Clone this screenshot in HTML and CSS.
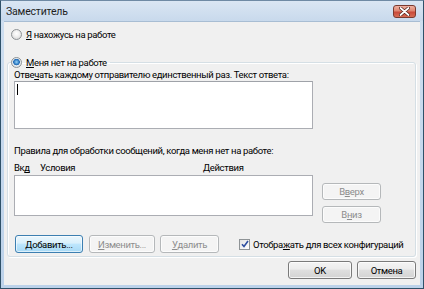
FILE: index.html
```html
<!DOCTYPE html>
<html lang="ru">
<head>
<meta charset="utf-8">
<title>Заместитель</title>
<link rel="stylesheet" href="styles.css">
</head>
<body>
<div class="window">
  <div class="titlebar">
    <span class="title">Заместитель</span>
    <span class="close">
      <svg width="11" height="9" viewBox="0 0 11 9"><path d="M1.5 1 L9.5 8 M9.5 1 L1.5 8" stroke="#4a1c14" stroke-width="3.2" stroke-linecap="round"/><path d="M1.5 1 L9.5 8 M9.5 1 L1.5 8" stroke="#ffffff" stroke-width="1.8" stroke-linecap="round"/></svg>
    </span>
  </div>
  <div class="client">
    <label class="radio first"><span class="rb"></span><span><u>Я</u> нахожусь на работе</span></label>
    <fieldset class="group">
      <legend><label class="radio"><span class="rb checked"></span><span><u>М</u>еня нет на работе</span></label></legend>
      <div class="lbl">Отве<u>ч</u>ать каждому отправителю единственный раз. Текст ответа:</div>
      <div class="textbox"><span class="caret"></span></div>
      <div class="lbl rules">Правила для обработки сообщений, когда меня нет на работе:</div>
      <div class="rulesrow">
        <div class="rulescol">
          <div class="cols"><span class="c1">Вк<u>д</u></span><span class="c2">Условия</span><span class="c3">Действия</span></div>
          <div class="listbox"></div>
        </div>
        <div class="sidebtns">
          <span class="btn disabled side">В<u>в</u>ерх</span>
          <span class="btn disabled side">В<u>н</u>из</span>
        </div>
      </div>
      <div class="btnrow">
        <span class="btn default add"><u>Д</u>обавить...</span>
        <span class="btn disabled edit"><u>И</u>зменить...</span>
        <span class="btn disabled del"><u>У</u>далить</span>
        <label class="check"><span class="cb"><svg width="8" height="8" viewBox="0 0 8 8"><path d="M1 4.2 L3 6.5 L7 1" fill="none" stroke="#2d4ea0" stroke-width="1.6"/></svg></span><span class="checktext">Отобра<u>ж</u>ать для всех конфигураций</span></label>
      </div>
    </fieldset>
    <div class="footer">
      <span class="btn ok">OK</span>
      <span class="btn cancel">Отмена</span>
    </div>
  </div>
</div>
</body>
</html>
```
FILE: styles.css
```css
html, body {
  margin: 0;
  padding: 0;
}
body {
  font-family: Roboto, "Liberation Sans", Arial, sans-serif;
  font-size: 9.5px;
  letter-spacing: -0.35px;
  color: #000;
  background: #fff;
}
u { text-decoration: underline; text-underline-offset: 1px; }

.window {
  width: 424px;
  height: 289px;
  box-sizing: border-box;
  border: 1px solid #2f5169;
  border-top-color: #6f8aa4;
  background: linear-gradient(#cfdff0, #bcd2ea);
  padding: 0 3px 3px 3px;
  display: flex;
  flex-direction: column;
  overflow: hidden;
}

.titlebar {
  height: 20px;
  flex: none;
  display: flex;
  align-items: center;
  justify-content: space-between;
  background: linear-gradient(#dae6f3, #c8d9ec);
  margin: 0 -3px;
  padding: 0 7px 0 5px;
}
.title {
  font-size: 10.5px;
  letter-spacing: -0.2px;
  color: #1e1e1e;
}
.close {
  width: 23px;
  height: 13px;
  box-sizing: border-box;
  border: 1px solid #7a3a2f;
  border-radius: 3px;
  background: linear-gradient(#efb0a0 0%, #de8570 45%, #c94a3a 55%, #d66d55 100%);
  display: flex;
  align-items: center;
  justify-content: center;
  margin-top: 1px;
}

.client {
  flex: 1;
  min-height: 0;
  background: #f0f0f0;
  display: flex;
  flex-direction: column;
  padding-top: 6px;
  border-top: 1px solid #a8bdd3;
}

.radio {
  display: flex;
  align-items: center;
  gap: 4px;
  height: 13px;
  white-space: nowrap;
}
.radio.first {
  margin-left: 7px;
}
.rb {
  width: 9px;
  height: 9px;
  border-radius: 50%;
  border: 1px solid #8e9396;
  background: radial-gradient(circle at 50% 40%, #ffffff 0, #f1f1f1 40%, #cfcfcf 100%);
  flex: none;
}
.rb.checked {
  background: radial-gradient(circle at 50% 45%, #9cd2f5 0, #4f9ad7 1.6px, #1f66b1 3px, #e9eef2 3.6px, #cfd6dc 100%);
}

.group {
  margin: 15px 4px 0 3px;
  padding: 0 6px 3px 6px;
  border: 1px solid #d5dfe5;
  border-radius: 3px;
  box-shadow: inset 1px 1px 0 #ffffff, 1px 1px 0 #ffffff;
  min-width: 0;
}
.group legend {
  padding: 0 3px 0 0;
  margin-left: -3px;
}

.lbl {
  line-height: 12px;
  height: 12px;
  white-space: nowrap;
}
.textbox {
  width: 299px;
  height: 48px;
  box-sizing: border-box;
  border: 1px solid #abadb3;
  border-top-color: #9fa2a8;
  background: #fff;
  position: relative;
}
.caret {
  position: absolute;
  left: 2px;
  top: 2px;
  width: 1px;
  height: 11px;
  background: #000;
}
.lbl.rules {
  margin-top: 16px;
}

.rulesrow {
  display: flex;
  gap: 9px;
  margin-top: 5px;
}
.rulescol {
  width: 299px;
}
.cols {
  display: flex;
  height: 12px;
  line-height: 12px;
  white-space: nowrap;
}
.cols .c1 { width: 26px; }
.cols .c2 { width: 163px; }
.listbox {
  margin-top: 1px;
  width: 299px;
  height: 41px;
  box-sizing: border-box;
  border: 1px solid #abadb3;
  background: #fff;
}
.sidebtns {
  display: flex;
  flex-direction: column;
  gap: 6px;
  padding-top: 21px;
}

.btn {
  display: flex;
  align-items: center;
  justify-content: center;
  box-sizing: border-box;
  height: 18px;
  flex: none;
  border: 1px solid #7a7a7a;
  border-radius: 3px;
  background: linear-gradient(#f4f4f4 0%, #ececec 45%, #dfdfdf 50%, #d3d3d3 100%);
  box-shadow: inset 0 0 0 1px rgba(255, 255, 255, 0.75);
  color: #000;
  white-space: nowrap;
}
.btn.disabled {
  border-color: #b5b8ba;
  background: #f4f4f4;
  box-shadow: inset 0 0 0 1px #fcfcfc;
  color: #8d8d8d;
}
.btn.default {
  border-color: #3c7fb1;
  background: linear-gradient(#eaf6fd 0%, #d9f0fc 45%, #bee6fd 50%, #a7d9f5 100%);
  box-shadow: inset 0 0 0 1px rgba(255, 255, 255, 0.6);
}
.btn.side {
  width: 59px;
  height: 17px;
}

.btnrow {
  display: flex;
  align-items: center;
  margin-top: 12px;
  margin-left: 1px;
}
.btn.add { width: 68px; }
.btn.edit { width: 66px; margin-left: 6px; }
.btn.del { width: 59px; margin-left: 5px; }
.check {
  display: flex;
  align-items: center;
  gap: 3px;
  margin-left: 20px;
  white-space: nowrap;
}
.cb {
  width: 9px;
  height: 9px;
  flex: none;
  border: 1px solid #8e9396;
  background: linear-gradient(135deg, #e4e4e4, #ffffff);
  display: flex;
  align-items: center;
  justify-content: center;
}

.footer {
  display: flex;
  justify-content: flex-end;
  gap: 5px;
  margin: 4px 4px 0 0;
}
.btn.ok { width: 64px; }
.btn.cancel { width: 59px; }
```
